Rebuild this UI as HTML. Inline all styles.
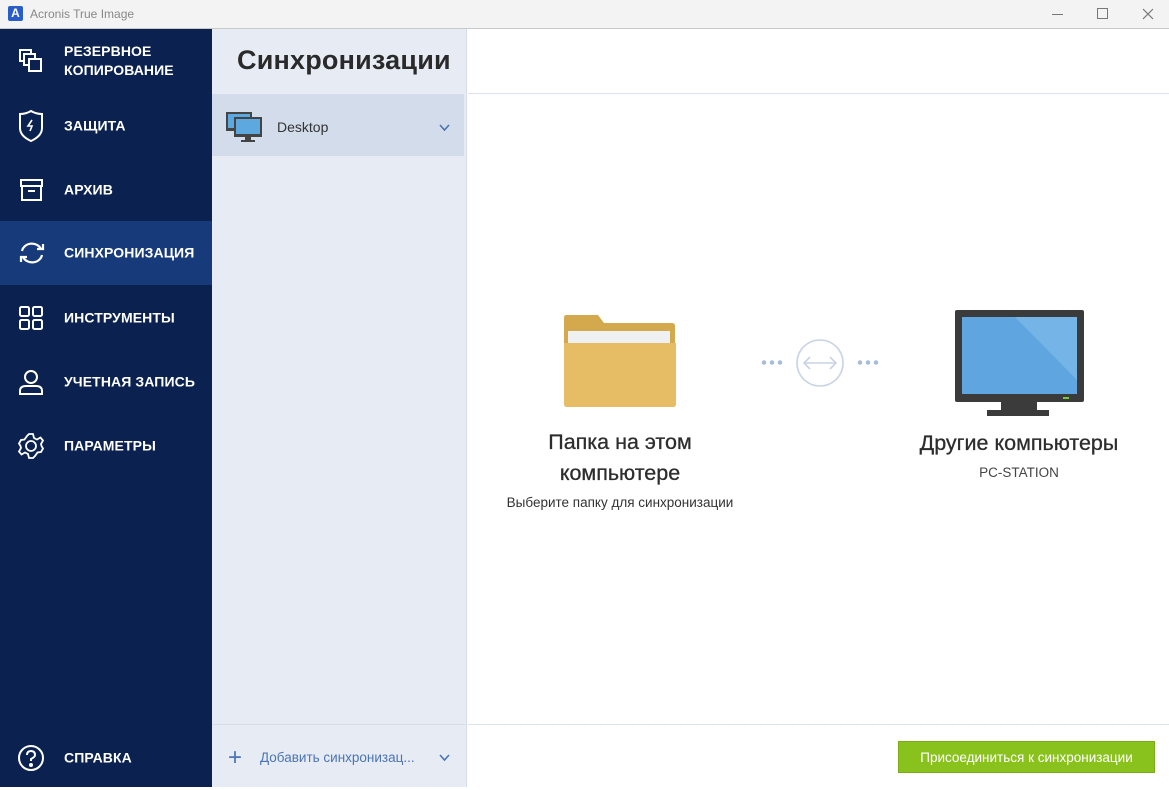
<!DOCTYPE html>
<html><head><meta charset="utf-8">
<style>
*{margin:0;padding:0;box-sizing:border-box}
body{width:1169px;height:787px;overflow:hidden;font-family:"Liberation Sans","Noto Sans CJK SC",sans-serif;background:#fff;position:relative}
.abs{position:absolute}
#tb{left:0;top:0;width:1169px;height:29px;background:#f3f3f3;border-bottom:1px solid #c9c9c9}
#side{left:0;top:29px;width:212px;height:758px;background:#0b2150}
.nav{position:absolute;left:0;width:212px;height:64px;color:#fff;font-weight:bold;font-size:14px;letter-spacing:.1px}
.nav .t{position:absolute;left:64px;top:50%;transform:translateY(-50%);line-height:19px}
.nav svg{position:absolute;left:16px;top:50%;transform:translateY(-50%)}
#mid{left:212px;top:29px;width:255px;height:758px;background:#e7ecf4;border-right:1px solid #d8dee8}
</style></head><body>
<div id="tb" class="abs">
 <div class="abs" style="left:8px;top:6px;width:15px;height:15px;background:#2a5cc9;border-radius:2px;color:#fff;font-size:12px;font-weight:bold;text-align:center;line-height:15px">A</div>
 <div class="abs" style="left:30px;top:7px;font-size:12px;color:#888">Acronis True Image</div>
 <div class="abs" style="left:1052px;top:14px;width:11px;height:1px;background:#777"></div>
 <div class="abs" style="left:1097px;top:8px;width:11px;height:11px;border:1px solid #777"></div>
 <svg class="abs" style="left:1142px;top:8px" width="12" height="12"><path d="M1 1L11 11M11 1L1 11" stroke="#777" stroke-width="1.2"/></svg>
</div>
<div id="side" class="abs">
 <div class="nav" style="top:0"><svg width="30" height="30" viewBox="0 0 30 30" fill="none" stroke="#fff" stroke-width="2"><rect x="4" y="4" width="11" height="11"/><rect x="8" y="8" width="11" height="11" fill="#0b2150"/><rect x="13" y="13" width="12" height="12" fill="#0b2150"/></svg><div class="t">РЕЗЕРВНОЕ<br>КОПИРОВАНИЕ</div></div>
 <div class="nav" style="top:65px"><svg width="30" height="34" viewBox="0 0 30 34" fill="none" stroke="#fff" stroke-width="2"><path d="M4 5Q10 5 15 2Q20 5 26 5V19Q26 27 15 32Q4 27 4 19Z"/><path d="M16 11L12 17H16L14 22" stroke-width="1.6"/></svg><div class="t">ЗАЩИТА</div></div>
 <div class="nav" style="top:129px"><svg width="30" height="30" viewBox="0 0 30 30" fill="none" stroke="#fff" stroke-width="2"><rect x="5" y="5" width="21" height="6"/><rect x="6" y="11" width="19" height="14"/><path d="M12 16H19"/></svg><div class="t">АРХИВ</div></div>
 <div class="nav" style="top:192px;background:#173a7b"><svg width="32" height="30" viewBox="0 0 32 30" fill="none" stroke="#fff" stroke-width="2.2"><path d="M6 13A10 9 0 0 1 25 11"/><path d="M21 11H27V6"/><path d="M26 17A10 9 0 0 1 7 19"/><path d="M11 19H5V24"/></svg><div class="t">СИНХРОНИЗАЦИЯ</div></div>
 <div class="nav" style="top:257px"><svg width="30" height="30" viewBox="0 0 30 30" fill="none" stroke="#fff" stroke-width="2"><rect x="4" y="4" width="9" height="9" rx="1.5"/><rect x="17" y="4" width="9" height="9" rx="1.5"/><rect x="4" y="17" width="9" height="9" rx="1.5"/><rect x="17" y="17" width="9" height="9" rx="1.5"/></svg><div class="t">ИНСТРУМЕНТЫ</div></div>
 <div class="nav" style="top:321px"><svg width="30" height="30" viewBox="0 0 30 30" fill="none" stroke="#fff" stroke-width="2"><circle cx="15" cy="10" r="6"/><path d="M4 27V24Q4 19 10 19H20Q26 19 26 24V27Z"/></svg><div class="t">УЧЕТНАЯ ЗАПИСЬ</div></div>
 <div class="nav" style="top:385px"><svg width="30" height="30" viewBox="0 0 30 30" fill="none" stroke="#fff" stroke-width="1.8"><path d="M13 3H17L18 7L21 8.5L24.5 6.5L27 9.5L25 13L25.5 15L27 17.5L25 21L21.5 21.5L19 25L17 27H13L12 23L9 21.5L5.5 23.5L3 20.5L5 17L4.5 15L3 12.5L5 9L8.5 8.5L11 5Z"/><circle cx="15" cy="15" r="5"/></svg><div class="t">ПАРАМЕТРЫ</div></div>
 <div class="nav" style="top:697px"><svg width="30" height="30" viewBox="0 0 30 30" fill="none" stroke="#fff" stroke-width="2"><circle cx="15" cy="15" r="12"/><path d="M11 12Q11 8 15 8Q19 8 19 12Q19 14 15 16V18"/><circle cx="15" cy="22" r="1" fill="#fff"/></svg><div class="t">СПРАВКА</div></div>
</div>
<div id="mid" class="abs">
 <div class="abs" style="left:25px;top:16px;font-size:27px;color:#2a2a2a;font-weight:bold;letter-spacing:.2px">Синхронизации</div>
 <div class="abs" style="left:0;top:65px;width:252px;height:62px;background:#d3dcea">
  <svg class="abs" style="left:14px;top:18px" width="38" height="32" viewBox="0 0 38 32"><rect x="0" y="0" width="26" height="19" fill="#444"/><rect x="2" y="2" width="22" height="14" fill="#5ea8e0"/><rect x="8" y="5" width="28" height="20" fill="#444"/><rect x="10" y="7" width="24" height="15" fill="#5ea8e0"/><rect x="19" y="25" width="6" height="3" fill="#444"/><rect x="15" y="28" width="14" height="2" fill="#444"/></svg>
  <div class="abs" style="left:65px;top:25px;font-size:14px;color:#333">Desktop</div>
  <svg class="abs" style="left:227px;top:30px" width="11" height="8"><path d="M1 1L5.5 6L10 1" stroke="#4a74b5" stroke-width="1.6" fill="none"/></svg>
 </div>
 <div class="abs" style="left:0;top:695px;width:255px;height:1px;background:#d6dde8"></div>
 <div class="abs" style="left:16px;top:719px;font-size:24px;color:#4a74b5;font-weight:300;line-height:20px">+</div>
 <div class="abs" style="left:48px;top:721px;font-size:13.5px;color:#4a74b5">Добавить синхронизац...</div>
 <svg class="abs" style="left:227px;top:725px" width="11" height="8"><path d="M1 1L5.5 6L10 1" stroke="#4a74b5" stroke-width="1.6" fill="none"/></svg>
</div>
<div class="abs" style="left:468px;top:93px;width:701px;height:1px;background:#dde3ee"></div>
<div class="abs" style="left:468px;top:724px;width:701px;height:1px;background:#dde3ee"></div>
<svg class="abs" style="left:562px;top:315px" width="116" height="94" viewBox="0 0 116 94"><path d="M4 0H36L42 8H110Q113 8 113 11V30H2V3Q2 0 4 0Z" fill="#d4a94e"/><rect x="6" y="16" width="102" height="20" fill="#eef0f2"/><path d="M2 28H114V89Q114 92 111 92H5Q2 92 2 89Z" fill="#e6bd65"/></svg>
<div class="abs" style="left:760px;top:360px;width:24px;height:5px;background:radial-gradient(circle,#a9bcd8 2px,transparent 2.5px) 0 0/8px 5px"></div>
<div class="abs" style="left:856px;top:360px;width:24px;height:5px;background:radial-gradient(circle,#a9bcd8 2px,transparent 2.5px) 0 0/8px 5px"></div>
<svg class="abs" style="left:795px;top:338px" width="50" height="50"><circle cx="25" cy="25" r="23" fill="none" stroke="#c9d3e6" stroke-width="1.6"/><path d="M9 25H41M15 19L9 25L15 31M35 19L41 25L35 31" stroke="#c9d3e6" stroke-width="1.6" fill="none"/></svg>
<svg class="abs" style="left:955px;top:310px" width="130" height="108" viewBox="0 0 130 108"><rect x="0" y="0" width="129" height="92" rx="2" fill="#3b3b3b"/><rect x="7" y="7" width="115" height="77" fill="#5fa6e0"/><path d="M60 7H122V70Z" fill="#74b4e6"/><rect x="108" y="87" width="6" height="2" fill="#7c3"/><rect x="46" y="92" width="36" height="8" fill="#3b3b3b"/><rect x="32" y="100" width="62" height="6" fill="#3b3b3b"/></svg>
<div class="abs" style="left:470px;top:427px;width:300px;text-align:center;font-size:21.5px;color:#2d2d2d;line-height:31px;-webkit-text-stroke:0.3px #2d2d2d">Папка на этом<br>компьютере</div>
<div class="abs" style="left:470px;top:495px;width:300px;text-align:center;font-size:13.5px;color:#333">Выберите папку для синхронизации</div>
<div class="abs" style="left:870px;top:428px;width:298px;text-align:center;font-size:21.5px;color:#2d2d2d;line-height:30px;-webkit-text-stroke:0.3px #2d2d2d">Другие компьютеры</div>
<div class="abs" style="left:870px;top:465px;width:298px;text-align:center;font-size:13.5px;color:#444">PC-STATION</div>
<div class="abs" style="left:898px;top:741px;width:257px;height:32px;background:#8ac21d;border:1px solid #7aab18;color:#fff;font-size:13.5px;text-align:center;line-height:31px">Присоединиться к синхронизации</div>
</body></html>
